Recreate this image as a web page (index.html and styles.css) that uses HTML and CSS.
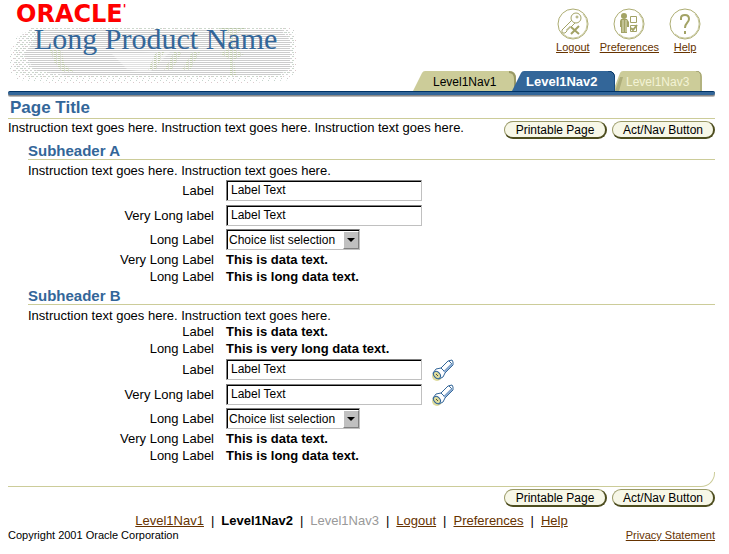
FILE: index.html
```html
<!DOCTYPE html>
<html lang="en">
<head>
    <meta charset="UTF-8">
    <meta name="viewport" content="width=device-width, initial-scale=1.0">
    <title>Oracle - Long Product Name</title>
    <link rel="stylesheet" href="styles.css">
</head>
<body>
    <header class="header">
        <div class="branding">
            <svg class="texture" viewBox="0 0 288 60" aria-hidden="true">
                <defs>
                    <pattern id="lines" width="2" height="2" patternUnits="userSpaceOnUse">
                        <rect width="2" height="1" fill="#cccccc"/>
                    </pattern>
                    <pattern id="dots" width="4" height="4" patternUnits="userSpaceOnUse">
                        <rect width="2" height="1" fill="#d3d3d3"/>
                        <rect x="2" y="2" width="2" height="1" fill="#cdd8cd"/>
                    </pattern>
                    <pattern id="sparse" width="6" height="6" patternUnits="userSpaceOnUse">
                        <rect width="1" height="1" fill="#c4d4cc"/>
                        <rect x="3" y="2" width="1" height="1" fill="#ddc8cc"/>
                        <rect x="1" y="4" width="1" height="1" fill="#cccccc"/>
                    </pattern>
                    <pattern id="green" width="4" height="2" patternUnits="userSpaceOnUse">
                        <rect width="2" height="1" fill="#b9c5a4"/>
                        <rect x="2" y="1" width="1" height="1" fill="#e6ecd6"/>
                    </pattern>
                </defs>
                <path fill="url(#sparse)" d="M20 1H284L287 20V44L280 54L230 58H50L8 54L0 46V26L6 12Z"/>
                <path fill="url(#dots)" d="M24 1H276L284 12V46L270 52H20L4 46V24L10 10Z"/>
                <path fill="url(#lines)" d="M34 3H270L280 14V42L268 50H60L24 44L14 28L26 12Z"/>
                <path fill="#ffffff" opacity=".4" d="M102 28L160 26L140 46L118 44Z"/>
                <path fill="url(#green)" d="M40 24H52L54 38L64 46H52L44 36ZM146 26H154L146 44H138ZM164 26H172L162 44H154ZM182 26H190L180 44H172ZM208 2H236L226 8L224 22L234 28L224 34L226 50H220V34L210 28L220 22V8Z"/>
            </svg>
            <div class="logo">ORACLE<sup>'</sup></div>
            <div class="product">Long Product Name</div>
        </div>
        <div class="header-right">
            <nav class="global-links">
                <a href="#">
                    <svg width="32" height="32" viewBox="0 0 32 32">
                        <circle cx="16" cy="16" r="15" fill="#fff" stroke="#adad72"/>
                        <path d="M6 26A14 14 0 0 0 26 6" fill="none" stroke="#c6c69a"/>
                        <g fill="none" stroke="#a3a366">
                            <circle cx="19" cy="10" r="5"/>
                            <circle cx="20" cy="9" r="1"/>
                            <path d="M15 12L5 22V25H8L10 23V21H12V19H14L18 15"/>
                            <path d="M14 19L22 26M22 18L14 26" stroke-width="2"/>
                        </g>
                    </svg>
                    Logout
                </a>
                <a href="#">
                    <svg width="32" height="32" viewBox="0 0 32 32">
                        <circle cx="16" cy="16" r="15" fill="#fff" stroke="#adad72"/>
                        <path d="M6 26A14 14 0 0 0 26 6" fill="none" stroke="#c6c69a"/>
                        <circle cx="11" cy="8" r="3" fill="#a3a366"/>
                        <path d="M8 11H14L16 14V19H14V25H8V19H7V13Z" fill="#a3a366"/>
                        <path d="M10 12V24M13 12V24" stroke="#e2e2c2"/>
                        <path d="M17.500 8.500H23.500V14.500H17.500ZM17.500 17.500H23.500V23.500H17.500Z" fill="none" stroke="#a3a366"/>
                        <path d="M18 20L20 22L24 17" fill="none" stroke="#a3a366" stroke-width="2"/>
                    </svg>
                    Preferences
                </a>
                <a href="#">
                    <svg width="32" height="32" viewBox="0 0 32 32">
                        <circle cx="16" cy="16" r="15" fill="#fff" stroke="#adad72"/>
                        <path d="M6 26A14 14 0 0 0 26 6" fill="none" stroke="#c6c69a"/>
                        <path d="M12 12V10Q12 7 16 7Q20 7 20 11Q20 13 18 15Q16 17 16 20" fill="none" stroke="#a3a366" stroke-width="2"/>
                        <rect x="15" y="23" width="2" height="3" fill="#a3a366"/>
                    </svg>
                    Help
                </a>
            </nav>
            <nav class="tabs">
                <a href="#" class="tab">
                    <svg viewBox="0 0 103 20" preserveAspectRatio="none" aria-hidden="true">
                        <path d="M0 20L9 2Q10 0 12 0H96Q103 0 103 7V20Z" fill="#cccc99"/>
                        <path d="M96 1Q102 1 102 8V20" fill="none" stroke="#999966" stroke-width="2"/>
                    </svg>
                    <span>Level1Nav1</span>
                </a>
                <a href="#" class="tab current">
                    <svg viewBox="0 0 103 20" preserveAspectRatio="none" aria-hidden="true">
                        <path d="M0 20L9 2Q10 0 12 0H96Q103 0 103 7V20Z" fill="#336699"/>
                        <path d="M96 0Q103 0 103 8V20" fill="none" stroke="#003366"/>
                    </svg>
                    <span>Level1Nav2</span>
                </a>
                <a href="#" class="tab disabled">
                    <svg viewBox="0 0 89 20" preserveAspectRatio="none" aria-hidden="true">
                        <path d="M0 20L7 2Q8 0 10 0H83Q89 0 89 6V20Z" fill="#cccc99"/>
                        <path d="M2 20L7 6H10L6 20Z" fill="#adad7a"/>
                        <path d="M83 0Q88 0 88 6V20" fill="none" stroke="#999966"/>
                    </svg>
                    <span>Level1Nav3</span>
                </a>
            </nav>
        </div>
    </header>
    <div class="bar"></div>

    <main>
        <h1>Page Title</h1>
        <div class="intro">
            <p>Instruction text goes here. Instruction text goes here. Instruction text goes here.</p>
            <div class="buttons">
                <button type="button">Printable Page</button>
                <button type="button">Act/Nav Button</button>
            </div>
        </div>

        <section>
            <h2>Subheader A</h2>
            <p>Instruction text goes here. Instruction text goes here.</p>
            <div class="row field">
                <label for="a1">Label</label>
                <input type="text" id="a1" value="Label Text">
            </div>
            <div class="row field">
                <label for="a2">Very Long label</label>
                <input type="text" id="a2" value="Label Text">
            </div>
            <div class="row choice">
                <label for="a3">Long Label</label>
                <div class="select">
                    <select id="a3"><option>Choice list selection</option></select>
                    <span class="arrow"></span>
                </div>
            </div>
            <div class="row"><span>Very Long Label</span><b>This is data text.</b></div>
            <div class="row"><span>Long Label</span><b>This is long data text.</b></div>
        </section>

        <section>
            <h2>Subheader B</h2>
            <p>Instruction text goes here. Instruction text goes here.</p>
            <div class="row"><span>Label</span><b>This is data text.</b></div>
            <div class="row"><span>Long Label</span><b>This is very long data text.</b></div>
            <div class="row field">
                <label for="b1">Label</label>
                <input type="text" id="b1" value="Label Text">
                <a href="#" class="search" aria-label="Search">
                    <svg width="22" height="22" viewBox="0 0 22 22">
                        <circle cx="5" cy="17" r="5" fill="#dedc9c"/>
                        <path d="M1 14L4 10L9 9L16 2L20 1L21 3L21 6L13 14L11 18L7 20Q2 19 1 14Z" fill="#fff" stroke="#336699"/>
                        <path d="M9 9L13 13M17 2L20 5" fill="none" stroke="#336699"/>
                        <path d="M12 13L20 5" stroke="#7fa3cc" stroke-width="2"/>
                        <ellipse cx="5" cy="16" rx="3" ry="4" transform="rotate(-40 5 16)" fill="#dedc9c" stroke="#336699"/>
                        <path d="M4 15L6 17" stroke="#555533"/>
                    </svg>
                </a>
            </div>
            <div class="row field">
                <label for="b2">Very Long label</label>
                <input type="text" id="b2" value="Label Text">
                <a href="#" class="search" aria-label="Search">
                    <svg width="22" height="22" viewBox="0 0 22 22">
                        <circle cx="5" cy="17" r="5" fill="#dedc9c"/>
                        <path d="M1 14L4 10L9 9L16 2L20 1L21 3L21 6L13 14L11 18L7 20Q2 19 1 14Z" fill="#fff" stroke="#336699"/>
                        <path d="M9 9L13 13M17 2L20 5" fill="none" stroke="#336699"/>
                        <path d="M12 13L20 5" stroke="#7fa3cc" stroke-width="2"/>
                        <ellipse cx="5" cy="16" rx="3" ry="4" transform="rotate(-40 5 16)" fill="#dedc9c" stroke="#336699"/>
                        <path d="M4 15L6 17" stroke="#555533"/>
                    </svg>
                </a>
            </div>
            <div class="row choice">
                <label for="b3">Long Label</label>
                <div class="select">
                    <select id="b3"><option>Choice list selection</option></select>
                    <span class="arrow"></span>
                </div>
            </div>
            <div class="row"><span>Very Long Label</span><b>This is data text.</b></div>
            <div class="row"><span>Long Label</span><b>This is long data text.</b></div>
        </section>

        <div class="page-end"></div>
        <div class="buttons bottom">
            <button type="button">Printable Page</button>
            <button type="button">Act/Nav Button</button>
        </div>
    </main>

    <footer>
        <nav class="footer-nav">
            <a href="#">Level1Nav1</a>
            <i>|</i>
            <b>Level1Nav2</b>
            <i>|</i>
            <span>Level1Nav3</span>
            <i>|</i>
            <a href="#">Logout</a>
            <i>|</i>
            <a href="#">Preferences</a>
            <i>|</i>
            <a href="#">Help</a>
        </nav>
        <div class="legal">
            <span>Copyright 2001 Oracle Corporation</span>
            <a href="#">Privacy Statement</a>
        </div>
    </footer>
</body>
</html>
```
FILE: styles.css
```css
* {
    box-sizing: border-box;
}

body {
    margin: 0;
    padding: 0 14px 0 8px;
    background-color: #ffffff;
    color: #000000;
    font-family: "Liberation Sans", Arial, Helvetica, sans-serif;
    font-size: 13px;
    line-height: 17px;
}

h1, h2, p {
    margin: 0;
}

a {
    color: #663300;
}

/* header */
.header {
    display: flex;
    justify-content: space-between;
    height: 91px;
}

.branding {
    position: relative;
    padding: 4px 0 0 8px;
    white-space: nowrap;
}

.texture {
    position: absolute;
    left: 2px;
    top: 26px;
    width: 288px;
    height: 60px;
}

.logo {
    position: relative;
    color: #ff0000;
    font-family: "DejaVu Sans", Verdana, sans-serif;
    font-size: 24px;
    font-weight: bold;
    line-height: 20px;
}

.logo sup {
    font-size: 12px;
    line-height: 0;
}

.product {
    position: relative;
    padding-left: 18px;
    color: #336699;
    font-family: "Liberation Serif", "Times New Roman", serif;
    font-size: 30px;
    line-height: 30px;
}

.header-right {
    display: flex;
    flex-direction: column;
    justify-content: space-between;
    align-items: flex-end;
    padding: 8px 13px 0 0;
}

.global-links {
    display: flex;
    gap: 10px;
    padding-right: 1px;
}

.global-links a {
    display: flex;
    flex-direction: column;
    align-items: center;
    font-size: 11px;
    line-height: 14px;
}

.tabs {
    display: flex;
}

.tab {
    position: relative;
    width: 103px;
    height: 20px;
    padding-left: 20px;
    color: #000000;
    font-size: 12px;
    line-height: 22px;
    text-decoration: none;
}

.tab svg {
    position: absolute;
    left: 0;
    top: 0;
    width: 100%;
    height: 100%;
}

.tab span {
    position: relative;
}

.tab.current {
    z-index: 1;
    margin-left: -4px;
    padding-left: 14px;
    color: #ffffff;
    font-size: 13px;
    font-weight: bold;
}

.tab.disabled {
    width: 89px;
    margin-left: -2px;
    padding-left: 13px;
    color: #f3f3d5;
}

.bar {
    height: 4px;
    border-top: 1px solid #003366;
    border-radius: 2px;
    background-color: #336699;
    box-shadow: 0 1px 0 #888888, 0 2px 0 #bbbbbb;
}

/* content */
h1 {
    padding: 3px 0 0 2px;
    border-bottom: 1px solid #cccc99;
    color: #336699;
    font-size: 17px;
    line-height: 20px;
}

.intro {
    display: flex;
    justify-content: space-between;
    align-items: flex-start;
    height: 24px;
}

.buttons {
    display: flex;
    gap: 5px;
    padding-top: 2px;
}

button {
    width: 103px;
    height: 18px;
    padding: 0;
    border: 1px solid #999966;
    border-right: 2px solid #4d4d1f;
    border-bottom: 2px solid #4d4d1f;
    border-radius: 9px;
    background-color: #f7f7e7;
    color: #000000;
    font-family: inherit;
    font-size: 12px;
    line-height: 14px;
}

h2 {
    margin-bottom: 3px;
    border-bottom: 1px solid #cccc99;
    color: #336699;
    font-size: 15px;
    line-height: 16px;
}

section {
    padding-left: 20px;
}

section + section {
    padding-top: 3px;
}

section p {
    line-height: 15px;
}

.row {
    display: grid;
    grid-template-columns: 186px 196px auto;
    justify-content: start;
    align-items: center;
    column-gap: 12px;
    height: 17px;
}

.row > :first-child {
    text-align: right;
}

.row b {
    white-space: nowrap;
}

.row.field {
    height: 25px;
}

.row.choice {
    height: 23px;
}

input[type="text"], select {
    width: 100%;
    height: 21px;
    border: 1px solid;
    border-color: #808080 #c0c0c0 #c0c0c0 #808080;
    border-radius: 0;
    background-color: #ffffff;
    box-shadow: inset 1px 1px 0 #000000;
    color: #000000;
    font-family: inherit;
    font-size: 12px;
}

input[type="text"] {
    padding: 0 4px 1px;
}

select {
    appearance: none;
    padding: 0 2px;
}

.select {
    position: relative;
    width: 134px;
    height: 21px;
}

.arrow {
    position: absolute;
    top: 2px;
    right: 1px;
    width: 16px;
    height: 18px;
    border: 1px solid;
    border-color: #ffffff #808080 #808080 #ffffff;
    background-color: #c0c0c0;
    pointer-events: none;
}

.arrow::after {
    content: "";
    position: absolute;
    left: 3px;
    top: 6px;
    border: 4px solid transparent;
    border-top-color: #000000;
    border-bottom: 0;
}

.search {
    display: block;
    height: 22px;
    margin-left: -2px;
}

.page-end {
    height: 15px;
    margin-top: 8px;
    border: 0 solid #cccc99;
    border-width: 0 1px 1px 0;
    border-bottom-right-radius: 14px;
}

.buttons.bottom {
    justify-content: flex-end;
}

/* footer */
.footer-nav {
    display: flex;
    justify-content: center;
    gap: 7px;
    padding: 5px 20px 0 0;
}

.footer-nav i {
    font-style: normal;
}

.footer-nav span {
    color: #999999;
}

.legal {
    display: flex;
    justify-content: space-between;
    padding-bottom: 8px;
    font-size: 11px;
    line-height: 13px;
}
```
